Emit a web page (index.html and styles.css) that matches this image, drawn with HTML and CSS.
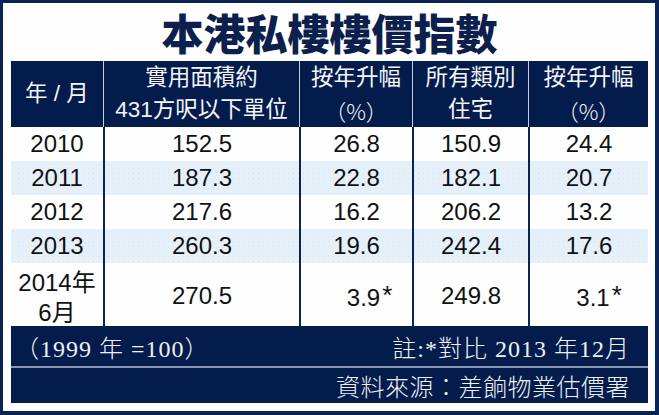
FILE: index.html
```html
<!DOCTYPE html>
<html>
<head>
    <meta charset="utf-8">
    <title>本港私樓樓價指數</title>
    <link rel="stylesheet" href="styles.css">
</head>
<body>
    <div class="frame">
        <h1 class="title">本港私樓樓價指數</h1>
        <div class="tbl">
            <div class="row head">
                <div class="c">年 / 月</div>
                <div class="c"><span>實用面積約</span><span>431方呎以下單位</span></div>
                <div class="c"><span>按年升幅</span><span class="pct">（%）</span></div>
                <div class="c"><span>所有類別</span><span>住宅</span></div>
                <div class="c"><span>按年升幅</span><span class="pct">（%）</span></div>
            </div>
            <div class="row">
                <div class="c">2010</div><div class="c">152.5</div><div class="c">26.8</div><div class="c">150.9</div><div class="c">24.4</div>
            </div>
            <div class="row alt">
                <div class="c">2011</div><div class="c">187.3</div><div class="c">22.8</div><div class="c">182.1</div><div class="c">20.7</div>
            </div>
            <div class="row">
                <div class="c">2012</div><div class="c">217.6</div><div class="c">16.2</div><div class="c">206.2</div><div class="c">13.2</div>
            </div>
            <div class="row alt">
                <div class="c">2013</div><div class="c">260.3</div><div class="c">19.6</div><div class="c">242.4</div><div class="c">17.6</div>
            </div>
            <div class="row tall">
                <div class="c ym"><span>2014年</span><span>6月</span></div><div class="c">270.5</div><div class="c"><span class="num n1">3.9<span class="ast">*</span></span></div><div class="c">249.8</div><div class="c"><span class="num n2">3.1<span class="ast">*</span></span></div>
            </div>
            <div class="foot note">
                <span>（1999 年 =100）</span>
                <span>註:*對比 2013 年12月</span>
            </div>
            <div class="foot src">資料來源：差餉物業估價署</div>
        </div>
    </div>
</body>
</html>
```

FILE: styles.css
```css
html, body {
    margin: 0;
    padding: 0;
    background: #fff;
}

.frame {
    width: 659px;
    height: 415px;
    box-sizing: border-box;
    border-style: solid;
    border-color: #0b2255;
    border-width: 3px 4px 4px 3px;
    background: #fdfefd;
    padding: 0 7px 8px 8px;
    font-family: "Liberation Sans", "Noto Sans CJK TC", sans-serif;
}

.title {
    margin: 0;
    height: 58px;
    line-height: 58px;
    text-align: center;
    font-family: "Noto Sans CJK TC", serif;
    font-weight: 900;
    font-size: 42px;
    letter-spacing: 0;
    color: #0d1f4d;
}

.row {
    display: grid;
    grid-template-columns: 92px 196px 113px 116px 120px;
    height: 34px;
    font-size: 24px;
    color: #111;
}

.c {
    display: flex;
    flex-direction: column;
    align-items: center;
    justify-content: center;
    text-align: center;
    white-space: nowrap;
}

.row .c + .c {
    border-left: 2px solid #0b2255;
}

.head {
    height: 66px;
    background: #041c4b;
    color: #f3f4f6;
    font-size: 22.5px;
    line-height: 32px;
}

.head .c + .c {
    border-left: 1px solid #c5cbd8;
}

.pct {
    font-family: "Noto Sans CJK TC", sans-serif;
    font-weight: 300;
    font-size: 22px;
}

.alt {
    background-color: #e4f1fb;
    background-image: radial-gradient(#f3d9e4 0.8px, transparent 1px);
    background-size: 5px 5px;
}

.tall {
    height: 63px;
}

.ym {
    line-height: 30px;
    padding-top: 5px;
}

.n1 {
    padding-left: 14px;
}

.n2 {
    padding-left: 8px;
}

.ast {
    display: inline-block;
    width: 14px;
    margin-right: -14px;
    font-size: 26px;
    vertical-align: 2px;
}

.foot {
    background: #041c4b;
    color: #eef0f4;
    font-family: "Liberation Serif", "Noto Sans CJK TC", serif;
    font-weight: 300;
    display: flex;
    align-items: center;
    padding: 0 18px 0 4px;
}

.note {
    height: 40px;
    font-size: 24px;
    letter-spacing: 1px;
    justify-content: space-between;
    border-bottom: 2px solid #8a95b1;
}

.src {
    height: 35px;
    font-size: 24px;
    letter-spacing: 0.5px;
    justify-content: flex-end;
}
```
